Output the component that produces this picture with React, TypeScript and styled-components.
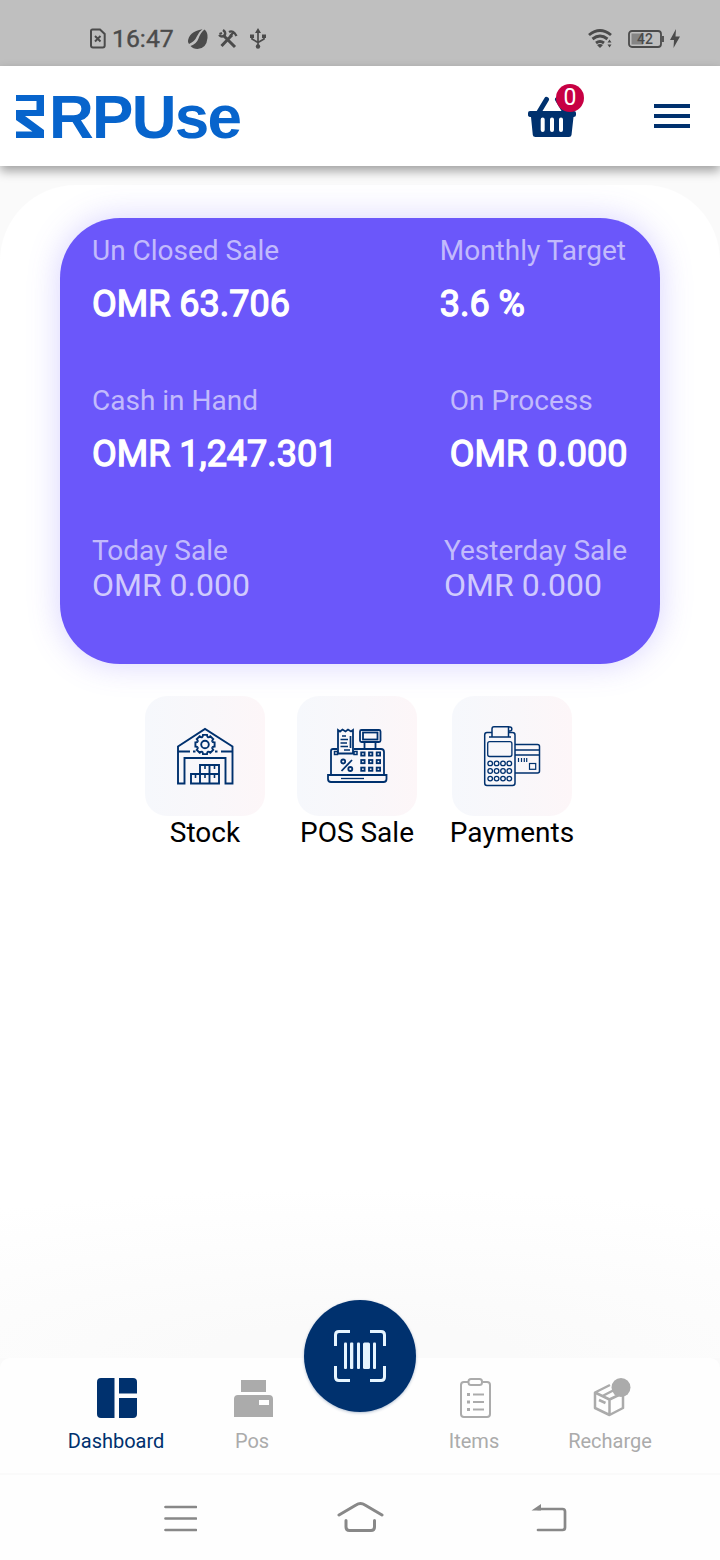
import React from 'react';
import styled, { createGlobalStyle } from 'styled-components';

const NAVY = '#00316e';
const MUTED = '#ababab';
const STATUS = '#4b4b4b';

const GlobalStyle = createGlobalStyle`
  * { box-sizing: border-box; }
  body { margin: 0; background: #fff; font-family: Roboto, 'Liberation Sans', sans-serif; }
  svg { display: block; flex: none; }
`;

const Screen = styled.div`
  width: 720px;
  height: 1560px;
  display: flex;
  flex-direction: column;
  overflow: hidden;
  background: #fafafa;
`;

const StatusBar = styled.div`
  height: 66px;
  flex: none;
  padding: 11px 40px 0 89px;
  background: #bfbfbf;
  color: ${STATUS};
  display: flex;
  align-items: center;
  justify-content: space-between;
`;

const StatusGroup = styled.div`
  display: flex;
  align-items: center;
`;

const Clock = styled.span`
  margin: 0 14px 0 6px;
  width: 62px;
  font-size: 24.8px;
  line-height: 30px;
  -webkit-text-stroke: 0.4px ${STATUS};
`;

const StatusIcon = styled.svg<{ $gap?: number }>`
  margin-left: ${(p) => p.$gap ?? 0}px;
`;

const Header = styled.header`
  position: relative;
  z-index: 1;
  height: 100px;
  flex: none;
  padding: 0 30px 0 16px;
  background: #fff;
  box-shadow: 0 5px 10px rgba(0, 0, 0, 0.36);
  display: flex;
  align-items: center;
`;

const Brand = styled.div`
  display: flex;
  align-items: center;
  gap: 4px;
  flex: 1;
  color: #0764cc;
`;

const BrandName = styled.span`
  font: 700 62px/62px 'Liberation Sans', sans-serif;
  letter-spacing: -1.7px;
  padding-top: 1px;
`;

const CartButton = styled.div`
  position: relative;
  width: 48px;
  margin-right: 78px;
`;

const Badge = styled.span`
  position: absolute;
  top: -11px;
  right: -8px;
  width: 28px;
  height: 28px;
  border-radius: 50%;
  background: #c70043;
  color: #fff;
  font-size: 23px;
  line-height: 28px;
  text-align: center;
`;

const Content = styled.main`
  flex: 1;
  margin-top: 19px;
  padding-top: 33px;
  border-radius: 76px 76px 0 0;
  background: radial-gradient(ellipse 760px 170px at 50% 100%, #fafafa 20%, #fff 100%);
  display: flex;
  flex-direction: column;
  align-items: center;
`;

const SummaryCard = styled.section`
  width: 600px;
  height: 446px;
  padding: 16px 32px 0;
  border-radius: 60px;
  background: #6b57fa;
  box-shadow: 0 0 32px rgba(107, 87, 250, 0.27);
`;

const SummaryRow = styled.div<{ $inset: number }>`
  height: 150px;
  padding-right: ${(p) => p.$inset}px;
  display: flex;
  justify-content: space-between;
`;

const Stat = styled.div`
  display: flex;
  flex-direction: column;
`;

const StatLabel = styled.span`
  color: rgba(255, 255, 255, 0.6);
  font-size: 28px;
  line-height: 33px;
`;

const StatValue = styled.span<{ $strong: boolean }>`
  color: ${(p) => (p.$strong ? '#fff' : 'rgba(255, 255, 255, 0.7)')};
  font-size: ${(p) => (p.$strong ? 36 : 32)}px;
  line-height: ${(p) => (p.$strong ? 42 : 37)}px;
  margin-top: ${(p) => (p.$strong ? 16 : 0)}px;
  -webkit-text-stroke: ${(p) => (p.$strong ? '1.3px #fff' : '0')};
`;

const Shortcuts = styled.div`
  margin-top: 32px;
  display: flex;
  gap: 32px;
`;

const Shortcut = styled.div<{ $width: number }>`
  width: ${(p) => p.$width}px;
  display: flex;
  flex-direction: column;
  align-items: center;
  color: #000;
  font-size: 28px;
  line-height: 33px;
`;

const Tile = styled.div`
  width: 120px;
  height: 120px;
  border-radius: 22px;
  background: linear-gradient(90deg, #f6f8fc, #f9f7fa 55%, #fdf6f8);
`;

const TabBar = styled.nav`
  position: relative;
  height: 117px;
  flex: none;
  padding-top: 20px;
  border-radius: 10px 10px 0 0;
  background: #fefefe;
  border-bottom: 2px solid #fafafa;
  display: grid;
  grid-template-columns: 136px 136px 86px 136px 136px;
  padding-left: 48px;
`;

const Tab = styled.div<{ $active?: boolean; $column?: number }>`
  grid-column: ${(p) => p.$column ?? 'auto'};
  display: flex;
  flex-direction: column;
  align-items: center;
  gap: 12px;
  color: ${(p) => (p.$active ? NAVY : MUTED)};
  font-size: 20px;
  line-height: 23px;

  svg {
    margin-left: 2px;
  }
`;

const ScanButton = styled.div`
  position: absolute;
  left: 304px;
  top: -58px;
  width: 112px;
  height: 112px;
  border-radius: 50%;
  background: ${NAVY};
  box-shadow: 0 1px 3px rgba(0, 49, 110, 0.3);
`;

const SystemNav = styled.div`
  height: 85px;
  flex: none;
  padding: 25px 152px 0 161px;
  background: #fefefe;
  display: grid;
  grid-template-columns: 175px 194px 36px;
`;

const BrandMark = () => (
  <svg width="29" height="43" viewBox="0 0 29 43" fill="currentColor">
    <path d="M0 0H28V21H9L28 35V43H0V36.500H16.500L0 25V15H20.500V6H0Z" />
  </svg>
);

const BasketIcon = () => (
  <svg width="48" height="42" viewBox="0 0 48 42" fill={NAVY}>
    <path d="M11 17 18.500 4.500M37 17 29.500 4.500" stroke={NAVY} strokeWidth="5" strokeLinecap="round" />
    <path d="M2 16H46Q48 16 48 18V20Q48 22 45.500 22L43.500 40Q43.200 42 41 42H7.500Q5 42 4.800 40L3 22Q0 22 0 20V18Q0 16 2 16Z" />
    <path d="M14.700 24.500V35M24 24.500V35M33 24.500V35" stroke="#fff" strokeWidth="4" strokeLinecap="round" />
  </svg>
);

const MenuIcon = () => (
  <svg width="36" height="24" viewBox="0 0 36 24" fill={NAVY}>
    <path d="M0 0H36V4H0ZM0 10H36V14H0ZM0 20H36V24H0Z" />
  </svg>
);

const gearTeeth = [0, 45, 90, 135, 180, 225, 270, 315];

const StockIcon = () => (
  <svg width="120" height="120" viewBox="0 0 120 120" fill="none" stroke={NAVY} strokeWidth="1.900">
    <path d="M33 87.500V50.500L60 33 87.500 50.500V87.500H80.500V62H39.500V87.500Z" />
    <path d="M33 55.500H45M48 55.500H50.500M70 55.500H72.500M76 55.500H87" />
    <circle cx="60" cy="48.500" r="9.800" fill="#f9f8fb" stroke="none" />
    {gearTeeth.map((angle) => (
      <path
        key={angle}
        transform={`rotate(${angle} 60 48.500)`}
        d="M56.900 41.300Q57.900 40.900 58 38.900H62Q62.100 40.900 63.100 41.300"
        strokeWidth="1.900"
      />
    ))}
    <circle cx="60" cy="48.500" r="3.800" />
    <path d="M46 78H74V87.500H46ZM55 87V69H74V78M64.500 69V87M55 78V87" />
    <path d="M60 69V73M69.500 69V73M50.500 78V82M60 78V82M69.500 78V82" strokeWidth="1.600" />
  </svg>
);

const keyColumns = [64.2, 72, 79.7];
const keyRows = [56.4, 64, 71.6];

const PosIcon = () => (
  <svg width="120" height="120" viewBox="0 0 120 120" fill="none" stroke={NAVY} strokeWidth="1.800">
    <path d="M41 57.500V34L43 35.500 45.500 33.500 48.500 35.500 51 33.500 54 35.500 56 34V57.500Z" />
    <path d="M45 40H49M43.500 43.500H51M43.500 47H50M43.500 50.500H51M47 54H53M53.500 40V52" strokeWidth="1.700" />
    <rect x="63" y="34" width="20.500" height="12" rx="1.500" />
    <rect x="66" y="36.500" width="14.500" height="7" />
    <path d="M67.500 46V52M78.500 46V52" />
    <path d="M40 53H36Q34 53 34 55V79M57 53H84Q87 53 87 56V79" />
    <path d="M37.500 55.500H40.500V58.500H37.500ZM57 55.500H60V58.500H57Z" strokeWidth="1.500" />
    {keyRows.map((y) => keyColumns.map((x) => <rect key={`${x}-${y}`} x={x} y={y} width="3.400" height="3.200" />))}
    <circle cx="46.200" cy="65.500" r="2" />
    <circle cx="53.300" cy="73" r="2" />
    <path d="M44.500 75 55 64" />
    <path d="M31 79H89.500V83Q89.500 86 86.500 86H34Q31 86 31 83Z" />
    <path d="M44 82.500H67" strokeWidth="1.300" />
  </svg>
);

const padColumns = [38.2, 44.6, 51, 57.3];
const padRows = [67.4, 75, 82.6];

const PaymentsIcon = () => (
  <svg width="120" height="120" viewBox="0 0 120 120" fill="none" stroke={NAVY} strokeWidth="1.500">
    <path d="M40 36.500H35Q32.700 36.500 32.700 39V87Q32.700 89.500 35 89.500H60.500Q63 89.500 63 87V39Q63 36.500 60.500 36.500H57" />
    <path d="M37 41H59M40 41V33Q40 30.800 42 30.800H56.500V40.500M56.500 31H58Q59.800 31 59.800 33T58 35H56.500" />
    <rect x="35.700" y="45.700" width="24.200" height="14.800" rx="2" strokeWidth="1.300" />
    {padRows.map((y) => padColumns.map((x) => <circle key={`${x}-${y}`} cx={x} cy={y} r="2.300" strokeWidth="1.300" />))}
    <path d="M63 48.500H85.500Q87.500 48.500 87.500 50.500V75Q87.500 77 85.500 77H63M63 54H87M63 59H87" />
    <path d="M66.500 62V66M69.500 62V66M72.300 62V66M74.700 62V66" strokeWidth="1.200" />
    <rect x="77.500" y="67.500" width="6.200" height="5.800" strokeWidth="1.200" />
  </svg>
);

const BarcodeIcon = () => (
  <svg width="112" height="112" viewBox="0 0 112 112" fill="none" stroke="#e6f5ff" strokeWidth="3">
    <path d="M31.500 46V35Q31.500 31.500 35 31.500H46M66 31.500H77Q80.500 31.500 80.500 35V46M80.500 66V77Q80.500 80.500 77 80.500H66M46 80.500H35Q31.500 80.500 31.500 77V66" />
    <g fill="#e6f5ff" stroke="none">
      <rect x="40" y="42.500" width="3" height="26.500" rx="1" />
      <rect x="46" y="42.500" width="3.300" height="26.500" rx="1" />
      <rect x="53" y="42.500" width="3" height="26.500" rx="1" />
      <rect x="59" y="42.500" width="7" height="26.500" rx="1.500" />
      <rect x="69" y="42.500" width="3" height="26.500" rx="1" />
    </g>
  </svg>
);

const DashboardIcon = () => (
  <svg width="40" height="40" viewBox="0 0 40 40" fill="currentColor">
    <path d="M4 0H17.500V40H4Q0 40 0 36V4Q0 0 4 0ZM22 0H36Q40 0 40 4V15.500H22ZM22 20H40V36Q40 40 36 40H22Z" />
  </svg>
);

const PrinterIcon = () => (
  <svg width="40" height="40" viewBox="0 0 40 40" fill="currentColor">
    <path d="M8 2H33V14H8Z" />
    <path fillRule="evenodd" d="M5 17H36Q40 17 40 21V39H1V21Q1 17 5 17ZM26 22V27H36V22Z" />
  </svg>
);

const ClipboardIcon = () => (
  <svg width="40" height="40" viewBox="0 0 40 40" fill="none" stroke="currentColor" strokeWidth="2">
    <path d="M13 4H9Q6 4 6 7V36Q6 39 9 39H32Q35 39 35 36V7Q35 4 32 4H28" />
    <rect x="13.500" y="1" width="13.500" height="6" rx="2.500" />
    <path d="M12 16.500H15M12 24H15M12 31.500H15" strokeWidth="3" />
    <path d="M18 16.500H29M18 24H29M18 31.500H29" />
  </svg>
);

const BoxIcon = () => (
  <svg width="40" height="40" viewBox="0 0 40 40" fill="none" stroke="currentColor" strokeWidth="2.500" strokeLinejoin="round">
    <path d="M19 7 4 14.500V30L18.500 37 32 30V15M4 14.500 18.500 21.500 32 15M18.500 21.500V37M11.500 18 25 11M8 22 14.500 25" />
    <circle cx="30" cy="9.500" r="9.500" fill="currentColor" stroke="none" />
  </svg>
);

const stats = [
  {
    inset: 2,
    items: [
      { label: 'Un Closed Sale', value: 'OMR 63.706' },
      { label: 'Monthly Target', value: '3.6 %' },
    ],
  },
  {
    inset: 0.5,
    items: [
      { label: 'Cash in Hand', value: 'OMR 1,247.301' },
      { label: 'On Process', value: 'OMR 0.000' },
    ],
  },
  {
    inset: 1,
    items: [
      { label: 'Today Sale', value: 'OMR 0.000' },
      { label: 'Yesterday Sale', value: 'OMR 0.000' },
    ],
  },
];

const shortcuts = [
  { label: 'Stock', width: 120, Icon: StockIcon },
  { label: 'POS Sale', width: 120, Icon: PosIcon },
  { label: 'Payments', width: 126, Icon: PaymentsIcon },
];

const PhoneStatus = () => (
  <StatusBar>
    <StatusGroup>
      <StatusIcon width="17" height="21" viewBox="0 0 17 21" fill="none" stroke={STATUS} strokeWidth="2">
        <path d="M3.500 1.500H11L15.700 6V17.500Q15.700 19.500 13.700 19.500H4Q2 19.500 2 17.500V3Q2 1.500 3.500 1.500ZM6 8 11.500 13.500M11.500 8 6 13.500" />
      </StatusIcon>
      <Clock>16:47</Clock>
      <StatusIcon width="20" height="20" viewBox="0 0 20 20" fill={STATUS}>
        <path d="M16.500 .5Q20 3 19.500 9Q18.500 19.500 9.500 20Q5 20 2.500 17Q8.500 15 10.500 9.500Q12.500 3.500 16.500 .5Z" />
        <path d="M0 13Q0 3 14.500 .3Q10.500 3 8.800 7.500Q6.800 12.500 1 15Z" />
      </StatusIcon>
      <StatusIcon $gap={10} width="20" height="20" viewBox="0 0 20 20" fill="none" stroke={STATUS}>
        <path d="M5 6 17 18M14 6 3.500 17" strokeWidth="3" />
        <path d="M1 6Q4 9 7 6Q8 3 5 1M4 4 1.500 5M11 3Q15 .5 18.500 7M12 7 16 3" strokeWidth="2.300" />
      </StatusIcon>
      <StatusIcon $gap={12} width="16" height="21" viewBox="0 0 16 21" fill={STATUS}>
        <path d="M8 3V18M2 8V11L8 14.500 14 11V8" fill="none" stroke={STATUS} strokeWidth="1.700" />
        <path d="M8 0 11 5H5ZM0 6.500H4V10H0ZM12 6.500H16V10H12Z" />
        <circle cx="8" cy="18.500" r="2.200" />
      </StatusIcon>
    </StatusGroup>
    <StatusGroup>
      <StatusIcon width="26" height="20" viewBox="0 0 26 20" fill="none" stroke={STATUS} strokeWidth="2.900">
        <path d="M1 6Q12 -3 23 6M4.500 10Q12 4 19.500 10M8 14Q12 11 16 14" />
        <path d="M9 16 12 19 15 16Q12 14 9 16ZM21.500 10.500 23.500 13.500H19.500ZM19.500 15.500H23.500L21.500 18.500Z" fill={STATUS} stroke="none" />
      </StatusIcon>
      <StatusIcon $gap={14} width="36" height="18" viewBox="0 0 36 18">
        <rect x="1" y="1" width="32" height="16" rx="3" fill="none" stroke={STATUS} strokeWidth="1.800" />
        <path d="M3.500 3.500H15V14.500H3.500Z" fill="#858585" />
        <path d="M35 6V12" stroke={STATUS} strokeWidth="1.800" />
        <text x="17" y="14" fill={STATUS} fontSize="14" fontWeight="500" textAnchor="middle">42</text>
      </StatusIcon>
      <StatusIcon $gap={6} width="10" height="19" viewBox="0 0 10 19" fill={STATUS}>
        <path d="M6 0 0 11H4L3.500 19 10 7.500H5.500Z" />
      </StatusIcon>
    </StatusGroup>
  </StatusBar>
);

export default function App() {
  return (
    <Screen>
      <GlobalStyle />
      <PhoneStatus />
      <Header>
        <Brand>
          <BrandMark />
          <BrandName>RPUse</BrandName>
        </Brand>
        <CartButton>
          <BasketIcon />
          <Badge>0</Badge>
        </CartButton>
        <MenuIcon />
      </Header>
      <Content>
        <SummaryCard>
          {stats.map((row, i) => (
            <SummaryRow key={i} $inset={row.inset}>
              {row.items.map((stat) => (
                <Stat key={stat.label}>
                  <StatLabel>{stat.label}</StatLabel>
                  <StatValue $strong={i < 2}>{stat.value}</StatValue>
                </Stat>
              ))}
            </SummaryRow>
          ))}
        </SummaryCard>
        <Shortcuts>
          {shortcuts.map(({ label, width, Icon }) => (
            <Shortcut key={label} $width={width}>
              <Tile>
                <Icon />
              </Tile>
              {label}
            </Shortcut>
          ))}
        </Shortcuts>
      </Content>
      <TabBar>
        <Tab $active>
          <DashboardIcon />
          Dashboard
        </Tab>
        <Tab>
          <PrinterIcon />
          Pos
        </Tab>
        <Tab $column={4}>
          <ClipboardIcon />
          Items
        </Tab>
        <Tab $column={5}>
          <BoxIcon />
          Recharge
        </Tab>
        <ScanButton>
          <BarcodeIcon />
        </ScanButton>
      </TabBar>
      <SystemNav>
        <svg width="36" height="34" viewBox="0 0 36 34" stroke="#888" strokeWidth="2.700" strokeLinecap="round">
          <path d="M4.500 7H35M4.500 18.500H35M4.500 30H35" />
        </svg>
        <svg width="48" height="34" viewBox="0 0 48 34" fill="none" stroke="#888" strokeWidth="3" strokeLinecap="round">
          <path d="M3 15 20 5Q24.500 2 29 5L46 15M10 20.500V27Q10 30.500 13.500 30.500H35Q38.500 30.500 38.500 27V20.500" />
        </svg>
        <svg width="37" height="34" viewBox="0 0 37 34" fill="none" stroke="#888" strokeWidth="2.700" strokeLinecap="round">
          <path d="M8 9H32.500Q35 9 35 11.500V27.500Q35 30 32.500 30H8" />
          <path d="M1.500 10.500 11 4V10.500Z" fill="#888" stroke="none" />
        </svg>
      </SystemNav>
    </Screen>
  );
}
